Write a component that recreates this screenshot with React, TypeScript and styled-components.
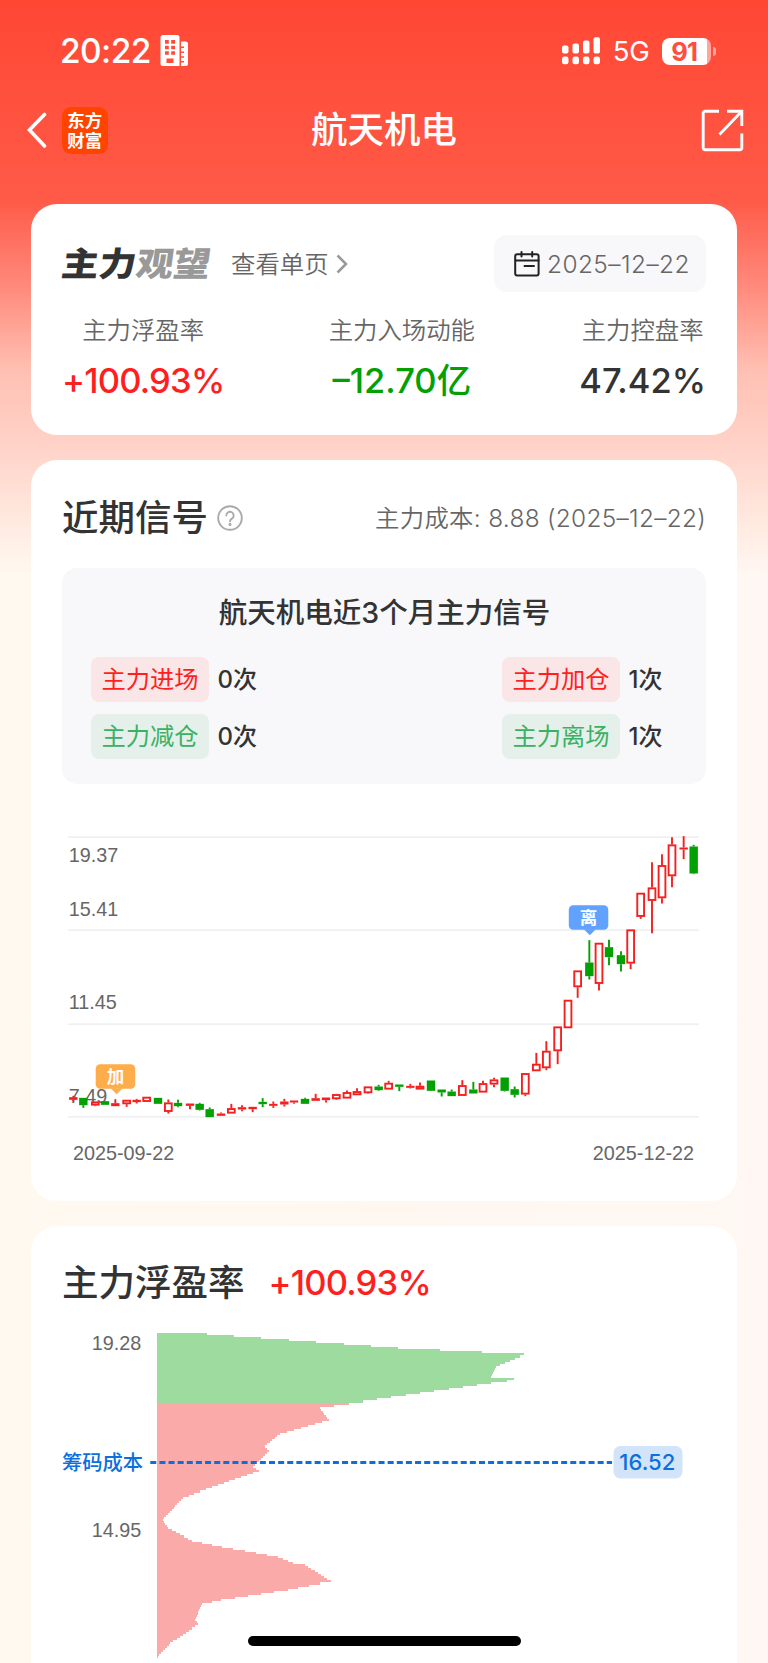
import React from "react";
import styled, { createGlobalStyle } from "styled-components";

const GlobalStyle = createGlobalStyle`
  *, *::before, *::after { box-sizing: border-box; }
  html, body { margin: 0; padding: 0; }
  body { background: #fff8f2; overflow: hidden; }
`;

const sans = `Inter, "Noto Sans CJK SC", sans-serif`;

const Screen = styled.div`
  position: relative;
  width: 768px;
  height: 1663px;
  overflow: hidden;
  font-family: ${sans};
  color: #333;
  background:
    linear-gradient(
      180deg,
      #ff4734 0,
      #ff5a48 200px,
      #ff8c7e 290px,
      #ffc0b3 370px,
      #ffd2c8 445px,
      #ffe9df 520px,
      rgba(255, 248, 241, 0) 575px
    ),
    linear-gradient(90deg, #fff9f0, #fff7f3);
`;

const StatusBar = styled.header`
  display: flex;
  align-items: center;
  justify-content: space-between;
  height: 102.5px;
  padding: 0 52px 0 60px;
  color: #fff;
`;

const StatusGroup = styled.div<{ $gap: number }>`
  display: flex;
  align-items: center;
  gap: ${(p) => p.$gap}px;
`;

const Clock = styled.span`
  font-size: 33.5px;
  font-weight: 500;
  line-height: 40px;
  letter-spacing: -0.6px;
`;

const Network = styled.span`
  font-size: 27.5px;
  line-height: 32px;
  letter-spacing: -0.3px;
`;

const Battery = styled.div`
  display: flex;
  align-items: center;
  gap: 2px;
`;

const BatteryBody = styled.div`
  width: 49.5px;
  height: 27.4px;
  border-radius: 8px;
  padding-right: 4px;
  background: linear-gradient(90deg, #fff 45px, rgba(255, 255, 255, 0.5) 45px);
  color: #ff4e3b;
  font-size: 25.5px;
  font-weight: 700;
  line-height: 27.4px;
  letter-spacing: -0.8px;
  text-align: center;
`;

const BatteryTip = styled.div`
  width: 3px;
  height: 9px;
  border-radius: 0 4px 4px 0;
  background: rgba(255, 255, 255, 0.5);
`;

const NavBar = styled.nav`
  display: grid;
  grid-template-columns: 1fr auto 1fr;
  align-items: center;
  height: 55.5px;
  padding: 0 24.5px;
  color: #fff;
`;

const NavStart = styled.div`
  display: flex;
  align-items: center;
  gap: 15px;
`;

const NavEnd = styled.div`
  display: flex;
  justify-content: flex-end;
`;

const AppBadge = styled.div`
  width: 46.5px;
  height: 46.5px;
  border-radius: 9px;
  background: #ff4400;
  padding: 4px 0;
  font-size: 17.5px;
  font-weight: 700;
  line-height: 19.5px;
  text-align: center;
`;

const NavTitle = styled.h1`
  margin: 0;
  font-size: 36.5px;
  font-weight: 500;
  line-height: 48px;
`;

const Cards = styled.main`
  display: flex;
  flex-direction: column;
  gap: 25px;
  padding: 46px 31px 0;
`;

const Card = styled.section<{ $height: number }>`
  height: ${(p) => p.$height}px;
  border-radius: 26px;
  background: #fff;
`;

const CardRow = styled.div<{ $height: number; $top: number }>`
  display: flex;
  align-items: center;
  justify-content: space-between;
  height: ${(p) => p.$height}px;
  padding: ${(p) => p.$top}px 31px 0;
`;

const Inline = styled.div<{ $gap: number }>`
  display: flex;
  align-items: center;
  gap: ${(p) => p.$gap}px;
`;

const StanceLogo = styled.div`
  width: 148px;
  color: #333;
  font-size: 33.5px;
  font-weight: 900;
  line-height: 40px;
  white-space: nowrap;
  transform: skewX(-8deg) scaleX(1.11);
  transform-origin: 0 50%;
`;

const StanceMuted = styled.span`
  color: #999;
`;

const Muted = styled.span<{ $spacing?: number }>`
  color: #666;
  font-size: 24.4px;
  font-weight: 350;
  line-height: 36px;
  letter-spacing: ${(p) => p.$spacing ?? 0}px;
`;

const DatePill = styled.div`
  display: flex;
  align-items: center;
  gap: 7px;
  width: 212px;
  height: 57px;
  padding-left: 20px;
  border-radius: 13px;
  background: #f8f8fb;
`;

const Metrics = styled.div`
  display: flex;
  justify-content: space-between;
  padding: 20px 31px 0;
`;

const Metric = styled.div`
  display: flex;
  flex-direction: column;
  align-items: center;
  gap: 11.5px;
`;

const Figure = styled.span<{ $color: string; $spacing?: number }>`
  color: ${(p) => p.$color};
  font-size: 34.5px;
  font-weight: 500;
  line-height: 42px;
  letter-spacing: ${(p) => p.$spacing ?? 0}px;
`;

const CardTitle = styled.h2`
  margin: 0;
  font-size: 36.5px;
  font-weight: 500;
  line-height: 48px;
  color: #333;
`;

const SignalPanel = styled.div`
  height: 216px;
  margin: 0 31px;
  padding: 25px 28px 0 29px;
  border-radius: 15px;
  background: #f8f8fb;
`;

const PanelTitle = styled.h3`
  margin: 0 0 24.5px;
  font-size: 28.5px;
  font-weight: 500;
  line-height: 40px;
  text-align: center;
`;

const SignalGrid = styled.div`
  display: grid;
  grid-template-columns: 411px auto;
  row-gap: 12px;
`;

const Signal = styled.div`
  display: flex;
  align-items: center;
  gap: 8.5px;
  height: 45px;
  font-size: 24px;
  font-weight: 500;
  line-height: 36px;
`;

const Tag = styled.span<{ $tone: "buy" | "sell" }>`
  width: 118px;
  height: 45px;
  border-radius: 8px;
  font-size: 24.3px;
  font-weight: 400;
  line-height: 44px;
  text-align: center;
  color: ${(p) => (p.$tone === "buy" ? "#ff1f1f" : "#3bb166")};
  background: ${(p) => (p.$tone === "buy" ? "#fae5e7" : "#e5f0ea")};
`;

const ChartSvg = styled.svg`
  display: block;
`;

const HomeBar = styled.div`
  position: absolute;
  left: 247.5px;
  bottom: 17px;
  width: 273.5px;
  height: 10px;
  border-radius: 5px;
  background: #000;
`;

const RED = "#f51f1f";
const GREEN = "#02a002";

type Candle = [x: number, up: 0 | 1, top: number, bottom: number, high?: number, low?: number];

// Values are in thirds of a pixel from the plot origin (50, 820).
const candles: Candle[] = [
  [70, 1, 830, 838, 826, 842], [100, 0, 832, 854, 832, 862], [136, 1, 843, 855, 843, 857],
  [165, 0, 842, 853], [196, 1, 848, 857, 836, 857], [230, 1, 838, 851, 838, 859],
  [260, 1, 838, 845, 835, 849], [290, 1, 829, 844], [324, 0, 832, 850],
  [355, 1, 846, 874, 837, 879], [384, 0, 847, 857, 838, 860], [420, 1, 849, 856, 849, 866],
  [449, 0, 850, 868, 847, 870], [479, 0, 866, 890, 861, 890], [513, 1, 879, 886, 876, 886],
  [544, 1, 863, 879, 850, 879], [576, 1, 860, 867, 854, 872], [608, 1, 859, 866, 859, 875],
  [638, 0, 844, 851, 833, 860], [670, 1, 850, 856, 843, 862], [703, 1, 843, 852, 835, 858],
  [732, 1, 840, 846, 840, 850], [765, 0, 835, 850, 832, 850], [797, 1, 833, 841, 820, 841],
  [828, 1, 831, 839, 831, 846], [859, 1, 821, 836, 820, 838], [891, 1, 815, 834, 810, 834],
  [921, 1, 812, 824, 803, 824], [954, 1, 798, 818, 798, 820], [986, 0, 798, 809, 793, 811],
  [1016, 1, 787, 807, 781, 807], [1048, 0, 792, 799, 792, 812], [1081, 1, 796, 802, 790, 804],
  [1110, 1, 796, 807, 786, 807], [1143, 0, 780, 811], [1175, 0, 807, 816, 807, 828],
  [1205, 0, 813, 827, 807, 827], [1237, 1, 794, 826, 779, 826], [1270, 0, 807, 819, 784, 819],
  [1299, 1, 788, 816, 781, 816], [1332, 1, 777, 792, 772, 800], [1364, 0, 771, 811, 771, 813],
  [1394, 0, 806, 823, 798, 831], [1426, 1, 758, 822, 758, 827], [1459, 1, 730, 752, 697, 752],
  [1489, 1, 691, 743, 662, 749], [1523, 1, 618, 692, 618, 731], [1554, 1, 538, 623],
  [1583, 1, 450, 500, 450, 532], [1618, 0, 426, 467, 359, 477], [1647, 1, 367, 490, 367, 510],
  [1677, 0, 380, 410, 358, 434], [1713, 0, 404, 431, 392, 453], [1742, 1, 327, 429, 327, 446],
  [1772, 1, 217, 289, 217, 295], [1806, 1, 201, 241, 125, 338], [1836, 1, 134, 233, 101, 249],
  [1866, 1, 72, 167, 50, 200], [1901, 1, 81, 87, 47, 116], [1931, 0, 78, 159, 73, 161],
];

function CandleMark({ data }: { data: Candle }) {
  const [cx, up, top, bottom, high = top, low = bottom] = data;
  const x = 50 + cx / 3;
  const y = (v: number) => 820 + v / 3;
  const color = up ? RED : GREEN;
  const h = (bottom - top) / 3;
  const hollow = up === 1 && h > 3.6;
  return (
    <g stroke={color} strokeWidth={1.9}>
      {high < top && <line x1={x} x2={x} y1={y(high)} y2={y(top)} />}
      {low > bottom && <line x1={x} x2={x} y1={y(bottom)} y2={y(low)} />}
      {hollow ? (
        <rect x={x - 3.4} y={y(top) + 0.85} width={6.8} height={h - 1.7} fill="#fff" />
      ) : (
        <rect x={x - 4.2} y={y(top)} width={8.4} height={h} fill={color} stroke="none" />
      )}
    </g>
  );
}

function Flag({ x, y, color, text }: { x: number; y: number; color: string; text: string }) {
  return (
    <g>
      <rect x={x} y={y} width={39.5} height={24.5} rx={4.5} fill={color} />
      <path d={`M${x + 15} ${y + 24}h12l-6 6z`} fill={color} />
      <text x={x + 19.7} y={y + 18.6} fontSize={17.5} fontWeight={700} textAnchor="middle" fill="#fff" fontFamily="Noto Sans CJK SC, sans-serif">
        {text}
      </text>
    </g>
  );
}

const axisFont = "Liberation Sans, Arial, sans-serif";

function CandleChart() {
  return (
    <ChartSvg width={706} height={400} viewBox="31 783.5 706 400">
      <g stroke="#f0f0f0" strokeWidth={1.8}>
        {[836.6, 929.7, 1023.6, 1116.4].map((y) => (
          <line key={y} x1={68.3} x2={699} y1={y} y2={y} />
        ))}
      </g>
      <g fontFamily={axisFont} fontSize={19.8} fill="#666">
        <text x={68.8} y={861.2}>19.37</text>
        <text x={68.8} y={915.4}>15.41</text>
        <text x={68.8} y={1008.7}>11.45</text>
        <text x={68.8} y={1102.3}>7.49</text>
        <text x={73} y={1159.6}>2025-09-22</text>
        <text x={694} y={1159.6} textAnchor="end">2025-12-22</text>
      </g>
      {candles.map((c) => (
        <CandleMark key={c[0]} data={c} />
      ))}
      <Flag x={95.7} y={1063.7} color="#ffad4a" text="加" />
      <Flag x={568.8} y={904.7} color="#62a2ff" text="离" />
    </ChartSvg>
  );
}

// Knots of the chip distribution as [bar index, right edge in thirds of a pixel].
const knots: [number, number][] = [
  [0, 470], [7, 1045], [10, 1423], [16, 1337], [21, 1323], [22, 1392], [23, 1372], [24, 1324],
  [36, 810], [42, 836], [43, 815], [49, 689], [55, 644], [57, 656], [65, 608], [67, 626],
  [78, 433], [80, 398], [91, 338], [95, 354], [101, 426], [104, 516], [109, 685], [112, 730],
  [113, 765], [121, 842], [125, 713], [130, 514], [132, 455], [140, 435], [142, 445],
  [151, 361], [158, 323],
];

const PITCH = 2.045;
const FIRST_GAIN = 34;

function widthAt(index: number) {
  const i = knots.findIndex(([k]) => k >= index);
  const [k1, w1] = knots[i];
  if (i === 0) return (w1 - 321) / 3;
  const [k0, w0] = knots[i - 1];
  return (w0 + ((w1 - w0) * (index - k0)) / (k1 - k0) - 321) / 3;
}

const bars = Array.from({ length: 159 }, (_, i) => ({
  y: 1333 + i * PITCH,
  width: widthAt(i),
  fill: i >= FIRST_GAIN ? "#fbaaaa" : "#9edb9e",
}));

function ChipChart() {
  return (
    <ChartSvg width={706} height={343} viewBox="31 1320 706 343">
      <g shapeRendering="crispEdges">
        {bars.map((b) => (
          <rect key={b.y} x={157} y={b.y} width={b.width} height={PITCH} fill={b.fill} />
        ))}
      </g>
      <g fontSize={19.8} fill="#666" fontFamily={axisFont} textAnchor="end">
        <text x={141.3} y={1350}>19.28</text>
        <text x={141.3} y={1537.3}>14.95</text>
      </g>
      <text x={62} y={1470} fontSize={20.3} fontWeight={500} fill="#0b6fe0" fontFamily={sans}>
        筹码成本
      </text>
      <line x1={150.3} x2={612} y1={1462.5} y2={1462.5} stroke="#0b6fe0" strokeWidth={3.2} strokeDasharray="6 3.13" />
      <rect x={613.5} y={1446} width={69} height={32.5} rx={7} fill="#d2e4f9" />
      <text x={647.3} y={1470.2} fontSize={22} fontWeight={500} fill="#0b6fe0" fontFamily={sans} textAnchor="middle">
        16.52
      </text>
    </ChartSvg>
  );
}

function BuildingIcon() {
  return (
    <svg width="28" height="32" viewBox="0 0 28 32">
      <path
        fill="#fff"
        fillRule="evenodd"
        d="M3 0H17a2.5 2.5 0 0 1 2.5 2.5V31H3A2.5 2.5 0 0 1 .5 28.5V2.5A2.5 2.5 0 0 1 3 0ZM5 5V8.800H8.800V5ZM11.200 5V8.800H15V5ZM5 10.800V14.300H8.800V10.800ZM11.200 10.800V14.300H15V10.800ZM5 16.300V19.800H8.800V16.300ZM11.200 16.300V19.800H15V16.300ZM6.500 23.500V28H13.500V23.500Z"
      />
      <path
        fill="#fff"
        d="M21 6.500h4.500A2.500 2.500 0 0 1 28 9v19.500a2.500 2.500 0 0 1-2.500 2.500H21v-3.500h3v-1.500h-3v-3.300h3v-1.500h-3v-3.300h3v-1.500h-3v-3.300h3v-1.500h-3z"
      />
    </svg>
  );
}

function SignalIcon() {
  const tops = [8.5, 6.5, 3.5, 0.3];
  return (
    <svg width="39" height="28" viewBox="0 0 39 28" fill="#fff">
      {tops.map((top, i) => (
        <g key={top}>
          <rect x={i * 10.5} y={top} width={6.5} height={16.5 - top} rx={2} />
          <rect x={i * 10.5} y={19.6} width={6.5} height={7.6} rx={2.3} />
        </g>
      ))}
    </svg>
  );
}

function BackIcon() {
  return (
    <svg width="22" height="36" viewBox="0 0 22 36" fill="none">
      <path d="M19.500 2.500 4.500 18 19.500 34" stroke="#fff" strokeWidth="3.600" strokeLinecap="round" />
    </svg>
  );
}

function ShareIcon() {
  return (
    <svg width="43" height="43" viewBox="0 0 43 43" fill="none" stroke="#fff" strokeWidth="2.900">
      <path d="M18 2.200H4a1.800 1.800 0 0 0-1.800 1.800V39a1.800 1.800 0 0 0 1.800 1.800H39a1.800 1.800 0 0 0 1.800-1.800V24.500" />
      <path d="M26 2.200H40.800V17" />
      <path d="M40.500 2.500 18.500 25.500" />
    </svg>
  );
}

function CalendarIcon() {
  return (
    <svg width="26" height="26" viewBox="0 0 26 26" fill="none" stroke="#222" strokeWidth="2" strokeLinecap="round">
      <rect x="1.200" y="3.200" width="23.400" height="21.300" rx="2" />
      <path d="M1.500 9.500H24.500M7.500 1v4.500M18.200 1v4.500M10.500 15H20" />
    </svg>
  );
}

function ChevronIcon() {
  return (
    <svg width="12" height="20" viewBox="0 0 12 20" fill="none">
      <path d="M1.500 1.500 10 10 1.500 18.500" stroke="#999" strokeWidth="2.500" />
    </svg>
  );
}

function HelpIcon() {
  return (
    <svg width="26" height="26" viewBox="0 0 26 26" fill="none" stroke="#aaa" strokeWidth="1.900" strokeLinecap="round">
      <circle cx="13" cy="13" r="11.800" />
      <path d="M9.300 10.400a3.700 3.700 0 1 1 5.600 3.200c-1.300.8-1.900 1.300-1.900 2.700" />
      <circle cx="13" cy="19.400" r=".6" fill="#aaa" />
    </svg>
  );
}

const signals = [
  { label: "主力进场", tone: "buy", count: 0 },
  { label: "主力加仓", tone: "buy", count: 1 },
  { label: "主力减仓", tone: "sell", count: 0 },
  { label: "主力离场", tone: "sell", count: 1 },
] as const;

export default function App() {
  return (
    <Screen>
      <GlobalStyle />
      <StatusBar>
        <StatusGroup $gap={9.5}>
          <Clock>20:22</Clock>
          <BuildingIcon />
        </StatusGroup>
        <StatusGroup $gap={12}>
          <SignalIcon />
          <Network>5G</Network>
          <Battery>
            <BatteryBody>91</BatteryBody>
            <BatteryTip />
          </Battery>
        </StatusGroup>
      </StatusBar>
      <NavBar>
        <NavStart>
          <BackIcon />
          <AppBadge>
            东方
            <br />
            财富
          </AppBadge>
        </NavStart>
        <NavTitle>航天机电</NavTitle>
        <NavEnd>
          <ShareIcon />
        </NavEnd>
      </NavBar>
      <Cards>
        <Card $height={231}>
          <CardRow $height={88} $top={31}>
            <Inline $gap={21}>
              <StanceLogo>
                主力<StanceMuted>观望</StanceMuted>
              </StanceLogo>
              <Inline $gap={7}>
                <Muted>查看单页</Muted>
                <ChevronIcon />
              </Inline>
            </Inline>
            <DatePill>
              <CalendarIcon />
              <Muted $spacing={0.45}>2025–12–22</Muted>
            </DatePill>
          </CardRow>
          <Metrics>
            <Metric>
              <Muted>主力浮盈率</Muted>
              <Figure $color="#ff1f1f" $spacing={-0.8}>+100.93%</Figure>
            </Metric>
            <Metric>
              <Muted>主力入场动能</Muted>
              <Figure $color="#02a002">–12.70亿</Figure>
            </Metric>
            <Metric>
              <Muted>主力控盘率</Muted>
              <Figure $color="#333">47.42%</Figure>
            </Metric>
          </Metrics>
        </Card>
        <Card $height={741}>
          <CardRow $height={107.5} $top={8}>
            <Inline $gap={9}>
              <CardTitle>近期信号</CardTitle>
              <HelpIcon />
            </Inline>
            <Muted $spacing={0.3}>主力成本: 8.88 (2025–12–22)</Muted>
          </CardRow>
          <SignalPanel>
            <PanelTitle>航天机电近3个月主力信号</PanelTitle>
            <SignalGrid>
              {signals.map((s) => (
                <Signal key={s.label}>
                  <Tag $tone={s.tone}>{s.label}</Tag>
                  <span>{s.count}次</span>
                </Signal>
              ))}
            </SignalGrid>
          </SignalPanel>
          <CandleChart />
        </Card>
        <Card $height={480}>
          <CardRow $height={94} $top={20.5}>
            <Inline $gap={24}>
              <CardTitle>主力浮盈率</CardTitle>
              <Figure $color="#ff1f1f" $spacing={-0.8}>+100.93%</Figure>
            </Inline>
          </CardRow>
          <ChipChart />
        </Card>
      </Cards>
      <HomeBar />
    </Screen>
  );
}
